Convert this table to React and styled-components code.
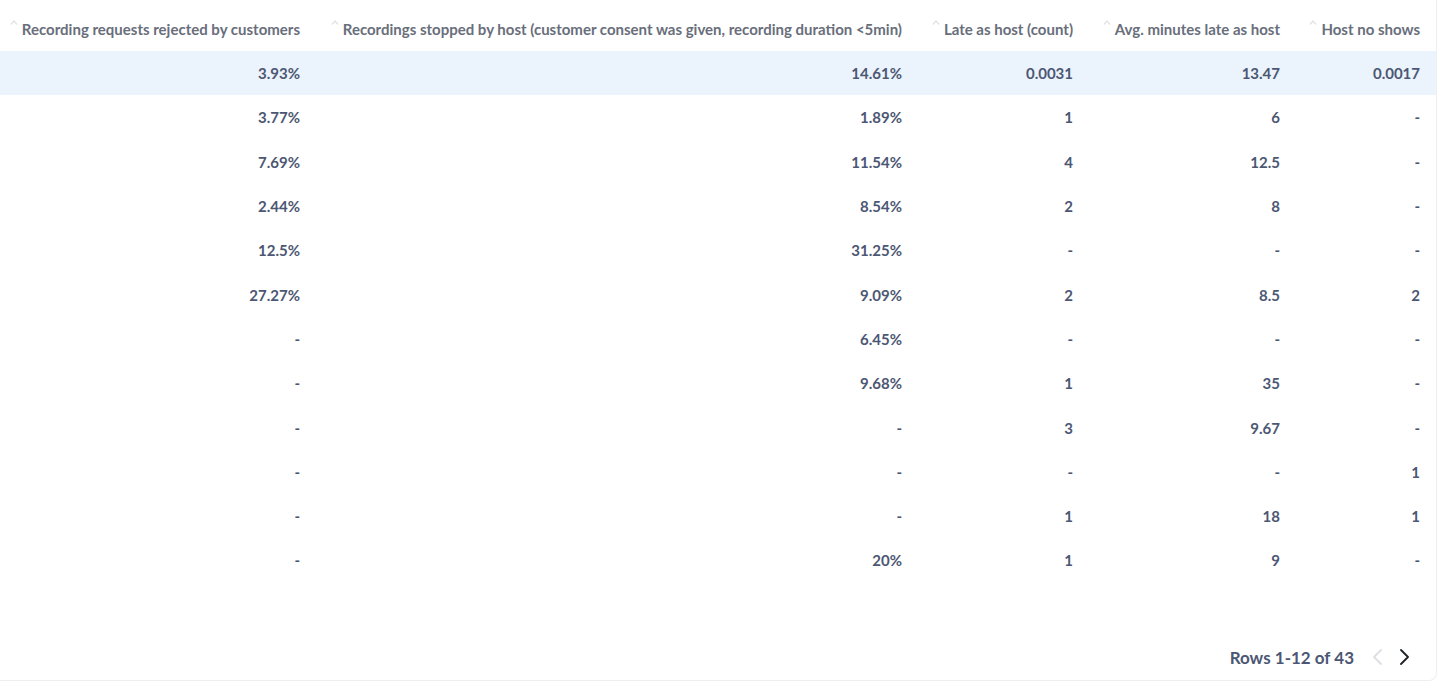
import React from "react";
import styled, { createGlobalStyle } from "styled-components";

const GlobalStyle = createGlobalStyle`
    html, body {
        margin: 0;
        padding: 0;
        background: #FFF;
    }
    body {
        font-family: Lato, "Open Sans", sans-serif;
    }
`

const Card = styled.div`
    width: 1437px;
    height: 681px;
    box-sizing: border-box;
    display: flex;
    flex-direction: column;
    background-color: #FFF;
    border-right: 1px solid #EEEFF1;
    border-bottom: 1px solid #EEEFF1;
    border-bottom-right-radius: 8px;
    overflow: hidden;
`

const Table = styled.table`
    width: 1436px;
    table-layout: fixed;
    border-collapse: collapse;
`

const HeadCell = styled.th`
    height: 51px;
    box-sizing: border-box;
    padding: 19px 16px 12px 0;
    text-align: right;
    font-size: 15px;
    font-weight: 700;
    line-height: 20px;
    color: #696E7B;
    white-space: nowrap;
`

const SortArrow = styled.svg`
    width: 8px;
    height: 5px;
    margin-right: 4px;
    vertical-align: top;
    margin-top: 1px;
`

const Row = styled.tr`
    height: 44.3px;
    background-color: ${props => props.highlight ? "#EBF3FC" : "transparent"};
`

const Cell = styled.td`
    padding: 0 16px 0 0;
    text-align: right;
    font-size: 15px;
    font-weight: 700;
    color: #4C5773;
    white-space: nowrap;
`

const Spacer = styled.div`
    flex: 1;
`

const Footer = styled.div`
    height: 46px;
    flex-shrink: 0;
    display: flex;
    justify-content: flex-end;
    align-items: center;
    gap: 16px;
    padding-right: 26px;
`

const RowCount = styled.span`
    font-size: 17px;
    font-weight: 700;
    color: #4C5773;
    margin-right: 2px;
`

const PageButton = styled.button`
    border: none;
    background: none;
    padding: 0;
    display: flex;
    align-items: center;
    cursor: ${props => props.disabled ? "default" : "pointer"};
    color: ${props => props.disabled ? "#DCDFE4" : "#1E2126"};
`

const columns = [
    { title: "Recording requests rejected by customers", width: 316 },
    { title: "Recordings stopped by host (customer consent was given, recording duration <5min)", width: 602 },
    { title: "Late as host (count)", width: 171 },
    { title: "Avg. minutes late as host", width: 207 },
    { title: "Host no shows", width: 140 },
]

const rows = [
    ["3.93%", "14.61%", "0.0031", "13.47", "0.0017"],
    ["3.77%", "1.89%", "1", "6", "-"],
    ["7.69%", "11.54%", "4", "12.5", "-"],
    ["2.44%", "8.54%", "2", "8", "-"],
    ["12.5%", "31.25%", "-", "-", "-"],
    ["27.27%", "9.09%", "2", "8.5", "2"],
    ["-", "6.45%", "-", "-", "-"],
    ["-", "9.68%", "1", "35", "-"],
    ["-", "-", "3", "9.67", "-"],
    ["-", "-", "-", "-", "1"],
    ["-", "-", "1", "18", "1"],
    ["-", "20%", "1", "9", "-"],
]

function Chevron({ direction }) {
    const points = direction === "left" ? "9,1 2,8 9,15" : "2,1 9,8 2,15"
    return (
        <svg width="11" height="16" viewBox="0 0 11 16" fill="none">
            <polyline points={points} stroke="currentColor" strokeWidth="1.8" strokeLinecap="round" strokeLinejoin="round" />
        </svg>
    )
}

export default function App() {
    return (
        <>
            <GlobalStyle />
            <Card>
                <Table>
                    <colgroup>
                        {columns.map(col => <col key={col.title} style={{ width: col.width }} />)}
                    </colgroup>
                    <thead>
                        <tr>
                            {columns.map(col => (
                                <HeadCell key={col.title}>
                                    <SortArrow viewBox="0 0 8 5" fill="none">
                                        <polyline points="1,4.5 4,1 7,4.5" stroke="#DFE2E6" strokeWidth="1.2" />
                                    </SortArrow>
                                    {col.title}
                                </HeadCell>
                            ))}
                        </tr>
                    </thead>
                    <tbody>
                        {rows.map((row, i) => (
                            <Row key={i} highlight={i === 0}>
                                {row.map((value, j) => <Cell key={j}>{value}</Cell>)}
                            </Row>
                        ))}
                    </tbody>
                </Table>
                <Spacer />
                <Footer>
                    <RowCount>Rows 1-12 of 43</RowCount>
                    <PageButton disabled>
                        <Chevron direction="left" />
                    </PageButton>
                    <PageButton>
                        <Chevron direction="right" />
                    </PageButton>
                </Footer>
            </Card>
        </>
    )
}
